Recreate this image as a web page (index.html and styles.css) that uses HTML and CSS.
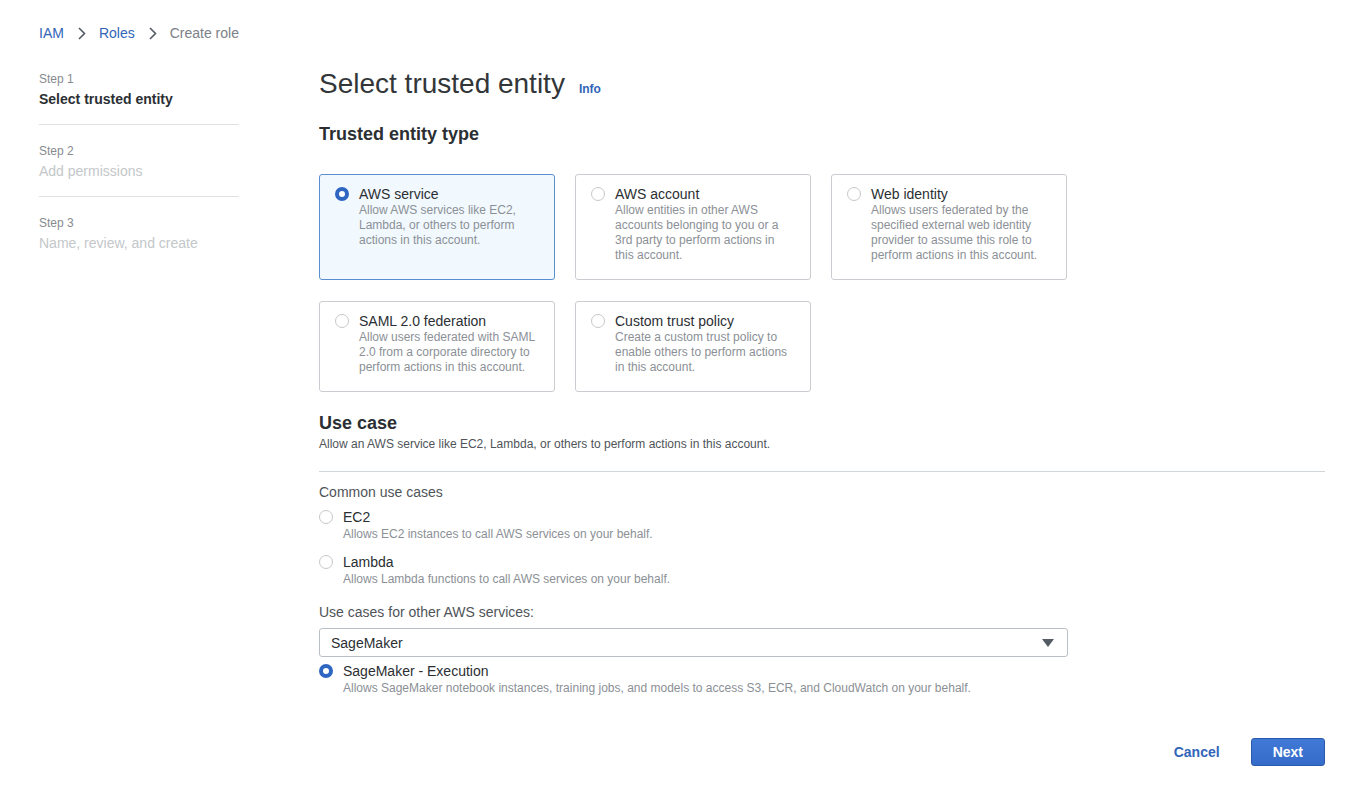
FILE: index.html
```html
<!DOCTYPE html>
<html lang="en">
<head>
<meta charset="utf-8">
<title>Create role - IAM</title>
<link rel="stylesheet" href="styles.css">
</head>
<body>
<div class="page">
  <nav class="breadcrumb">
    <a class="crumb-link" href="#">IAM</a>
    <svg class="chevron" width="8" height="13" viewBox="0 0 8 13"><path d="M1 1 L6.5 6.5 L1 12" fill="none" stroke="#545b64" stroke-width="1.6"/></svg>
    <a class="crumb-link" href="#">Roles</a>
    <svg class="chevron" width="8" height="13" viewBox="0 0 8 13"><path d="M1 1 L6.5 6.5 L1 12" fill="none" stroke="#545b64" stroke-width="1.6"/></svg>
    <span class="crumb-current">Create role</span>
  </nav>

  <div class="layout">
    <aside class="steps">
      <div class="step">
        <div class="step-label">Step 1</div>
        <div class="step-title step-active">Select trusted entity</div>
      </div>
      <div class="step">
        <div class="step-label">Step 2</div>
        <div class="step-title">Add permissions</div>
      </div>
      <div class="step step-last">
        <div class="step-label">Step 3</div>
        <div class="step-title">Name, review, and create</div>
      </div>
    </aside>

    <main class="main">
      <h1 class="page-title"><span>Select trusted entity</span><a class="info" href="#">Info</a></h1>
      <h2 class="section-title">Trusted entity type</h2>

      <div class="cards">
        <div class="card card-selected">
          <span class="radio radio-on"></span>
          <div class="card-text">
            <div class="card-title">AWS service</div>
            <div class="card-desc">Allow AWS services like EC2, Lambda, or others to perform actions in this account.</div>
          </div>
        </div>
        <div class="card">
          <span class="radio"></span>
          <div class="card-text">
            <div class="card-title">AWS account</div>
            <div class="card-desc">Allow entities in other AWS accounts belonging to you or a 3rd party to perform actions in this account.</div>
          </div>
        </div>
        <div class="card">
          <span class="radio"></span>
          <div class="card-text">
            <div class="card-title">Web identity</div>
            <div class="card-desc">Allows users federated by the specified external web identity provider to assume this role to perform actions in this account.</div>
          </div>
        </div>
        <div class="card">
          <span class="radio"></span>
          <div class="card-text">
            <div class="card-title">SAML 2.0 federation</div>
            <div class="card-desc">Allow users federated with SAML 2.0 from a corporate directory to perform actions in this account.</div>
          </div>
        </div>
        <div class="card">
          <span class="radio"></span>
          <div class="card-text">
            <div class="card-title">Custom trust policy</div>
            <div class="card-desc">Create a custom trust policy to enable others to perform actions in this account.</div>
          </div>
        </div>
      </div>

      <section class="usecase">
        <h2 class="section-title usecase-title">Use case</h2>
        <p class="usecase-sub">Allow an AWS service like EC2, Lambda, or others to perform actions in this account.</p>
        <div class="divider"></div>

        <div class="field-label">Common use cases</div>
        <div class="option">
          <span class="radio"></span>
          <div>
            <div class="option-title">EC2</div>
            <div class="option-desc">Allows EC2 instances to call AWS services on your behalf.</div>
          </div>
        </div>
        <div class="option option-gap">
          <span class="radio"></span>
          <div>
            <div class="option-title">Lambda</div>
            <div class="option-desc">Allows Lambda functions to call AWS services on your behalf.</div>
          </div>
        </div>

        <div class="field-label other-label">Use cases for other AWS services:</div>
        <div class="select">
          <span class="select-value">SageMaker</span>
          <svg class="caret" width="12" height="8" viewBox="0 0 12 8"><path d="M0 0 H12 L6 8 Z" fill="#545b64"/></svg>
        </div>
        <div class="option option-after-select">
          <span class="radio radio-on"></span>
          <div>
            <div class="option-title">SageMaker - Execution</div>
            <div class="option-desc">Allows SageMaker notebook instances, training jobs, and models to access S3, ECR, and CloudWatch on your behalf.</div>
          </div>
        </div>
      </section>

      <div class="actions">
        <button class="btn-link" type="button">Cancel</button>
        <button class="btn-primary" type="button">Next</button>
      </div>
    </main>
  </div>
</div>
</body>
</html>
```

FILE: styles.css
```css
* { box-sizing: border-box; }

html, body {
  margin: 0;
  padding: 0;
  background: #ffffff;
}

body {
  font-family: "Liberation Sans", Arial, Helvetica, sans-serif;
  color: #2b2f33;
  font-size: 14px;
}

.page {
  padding: 23px 39px 0 39px;
}

/* Breadcrumb */
.breadcrumb {
  display: flex;
  align-items: center;
  height: 20px;
  line-height: 20px;
  font-size: 14px;
}

.crumb-link {
  color: #3165b8;
  text-decoration: none;
}

.chevron {
  margin: 0 13px 0 14px;
  display: block;
}

.crumb-current {
  color: #7b8187;
}

/* Layout */
.layout {
  display: flex;
  gap: 80px;
  margin-top: 24px;
}

.steps {
  width: 200px;
  flex: none;
  padding-top: 4px;
}

.step {
  padding-bottom: 16px;
  border-bottom: 1px solid #dfe2e4;
  margin-bottom: 18px;
}

.step-last {
  border-bottom: none;
}

.step-label {
  font-size: 12px;
  line-height: 16px;
  color: #868b90;
}

.step-title {
  font-size: 14px;
  line-height: 18px;
  margin-top: 3px;
  color: #c3c7ca;
}

.step-active {
  font-weight: bold;
  color: #2b2f33;
}

/* Main */
.main {
  flex: 1;
  min-width: 0;
}

.page-title {
  margin: 0;
  height: 34px;
  font-size: 28px;
  line-height: 34px;
  font-weight: normal;
  color: #333639;
  display: flex;
  align-items: baseline;
  gap: 14px;
}

.info {
  font-size: 12px;
  line-height: 12px;
  font-weight: bold;
  color: #3165b8;
  text-decoration: none;
}

.section-title {
  margin: 22px 0 0 0;
  font-size: 18px;
  line-height: 22px;
  font-weight: bold;
  color: #2b2f33;
}

.cards {
  display: grid;
  grid-template-columns: repeat(3, 236px);
  column-gap: 20px;
  row-gap: 21px;
  margin-top: 29px;
  align-items: stretch;
}

.card {
  display: flex;
  align-items: flex-start;
  gap: 10px;
  border: 1px solid #c9cdd1;
  border-radius: 3px;
  padding: 10px 14px 16px 15px;
  background: #ffffff;
}

.card-selected {
  border-color: #5a8fcf;
  background: #f1f8fe;
}

.card-title {
  font-size: 14px;
  line-height: 18px;
  color: #2b2f33;
}

.card-desc {
  font-size: 12px;
  line-height: 15px;
  color: #8b9096;
}

.radio {
  flex: none;
  width: 14px;
  height: 14px;
  margin-top: 2px;
  border-radius: 50%;
  border: 1px solid #c4c8cb;
  background: #ffffff;
}

.radio-on {
  border: 4px solid #2f66c2;
  background: #ffffff;
}

/* Use case */
.usecase-title {
  margin-top: 20px;
}

.usecase-sub {
  margin: 2px 0 0 0;
  font-size: 12px;
  line-height: 16px;
  color: #4f5459;
}

.divider {
  height: 1px;
  background: #d0d5d9;
  margin-top: 19px;
}

.field-label {
  margin-top: 11px;
  font-size: 14px;
  line-height: 18px;
  color: #4f5459;
}

.option {
  display: flex;
  align-items: flex-start;
  gap: 10px;
  margin-top: 7px;
}

.option-gap {
  margin-top: 11px;
}

.option-title {
  font-size: 14px;
  line-height: 18px;
  color: #2b2f33;
}

.option-desc {
  font-size: 12px;
  line-height: 16px;
  color: #8b9096;
}

.other-label {
  margin-top: 16px;
}

.select {
  margin-top: 7px;
  width: 749px;
  height: 29px;
  border: 1px solid #b9bfc4;
  border-radius: 3px;
  display: flex;
  align-items: center;
  justify-content: space-between;
  padding: 0 13px 0 11px;
  font-size: 14px;
  color: #2b2f33;
}

.caret {
  display: block;
}

.option-after-select {
  margin-top: 5px;
}

/* Actions */
.actions {
  display: flex;
  justify-content: flex-end;
  align-items: center;
  gap: 31px;
  margin-top: 42px;
}

.btn-link {
  background: none;
  border: none;
  padding: 0;
  font-family: inherit;
  font-size: 14px;
  font-weight: bold;
  color: #3165b8;
  line-height: 18px;
  cursor: pointer;
}

.btn-primary {
  font-family: inherit;
  font-size: 14px;
  font-weight: bold;
  line-height: 18px;
  color: #ffffff;
  background: linear-gradient(#4179d6, #356bc9);
  border: 1px solid #2a5aab;
  border-radius: 3px;
  padding: 4px 21px;
  cursor: pointer;
}
```
